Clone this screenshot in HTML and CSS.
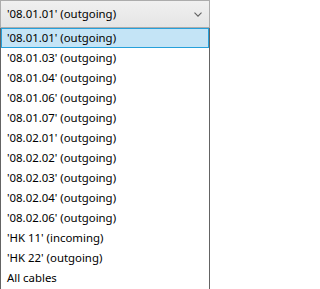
FILE: index.html
```html
<!DOCTYPE html>
<html>
<head>
<meta charset="utf-8">
<link rel="stylesheet" href="styles.css">
</head>
<body>
<div class="combo">
  <div class="head">
    <span class="value">'08.01.01' (outgoing)</span>
    <svg class="chev" width="8" height="5" viewBox="0 0 8 5"><path d="M0.5 0.7 L4 4.2 L7.5 0.7" fill="none" stroke="#606060" stroke-width="1.1"/></svg>
  </div>
  <ul class="list">
    <li class="item sel">'08.01.01' (outgoing)</li>
    <li class="item">'08.01.03' (outgoing)</li>
    <li class="item">'08.01.04' (outgoing)</li>
    <li class="item">'08.01.06' (outgoing)</li>
    <li class="item">'08.01.07' (outgoing)</li>
    <li class="item">'08.02.01' (outgoing)</li>
    <li class="item">'08.02.02' (outgoing)</li>
    <li class="item">'08.02.03' (outgoing)</li>
    <li class="item">'08.02.04' (outgoing)</li>
    <li class="item">'08.02.06' (outgoing)</li>
    <li class="item">'HK 11' (incoming)</li>
    <li class="item">'HK 22' (outgoing)</li>
    <li class="item">All cables</li>
  </ul>
</div>
</body>
</html>
```
FILE: styles.css
```css
html, body {
  margin: 0;
  padding: 0;
  background: #ffffff;
}
.combo {
  width: 210px;
  height: 289px;
  display: flex;
  flex-direction: column;
  font-family: "Noto Sans", "Open Sans", sans-serif;
  font-size: 11.4px;
  color: #000;
  overflow: hidden;
}
.head {
  height: 28px;
  flex: none;
  border: 1px solid #acacac;
  background: linear-gradient(#f0f0f0, #e5e5e5);
  display: flex;
  align-items: center;
  justify-content: space-between;
  padding: 0 7px 0 6px;
  box-sizing: border-box;
}
.value {
  line-height: 16px;
}
.chev {
  display: block;
  margin-top: 1px;
}
.list {
  list-style: none;
  margin: 0;
  padding: 0;
  border: 1px solid #646464;
  border-top: 0;
  border-bottom: 0;
  flex: 1;
  box-sizing: border-box;
}
.item {
  height: 20px;
  box-sizing: border-box;
  padding: 0 0 0 5px;
  border: 1px solid transparent;
  display: flex;
  align-items: center;
  line-height: 16px;
}
.item.sel {
  border-color: #26a0da;
  background: #c4e4f6;
}
```
